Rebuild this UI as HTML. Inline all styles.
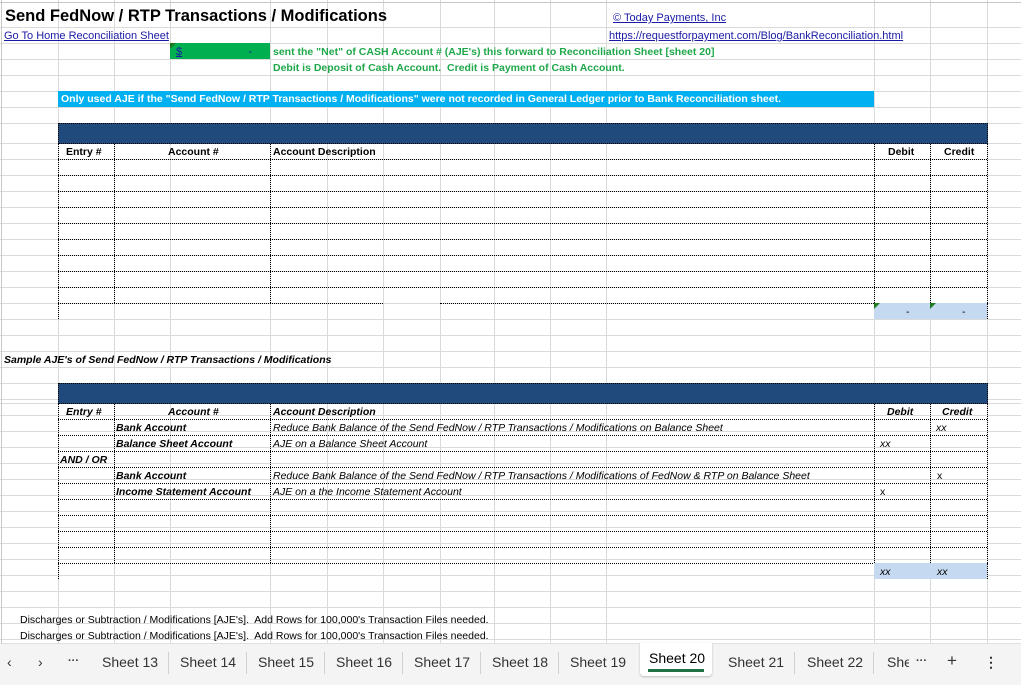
<!DOCTYPE html>
<html><head><meta charset="utf-8"><style>
body{margin:0;width:1021px;height:684px;overflow:hidden;background:#fff;position:relative;font-family:"Liberation Sans",Arial,sans-serif;}
.a{position:absolute;white-space:nowrap;}
.h{position:absolute;height:1px;background:#dadada;}
.v{position:absolute;width:1px;background:#dadada;}
.dh{position:absolute;height:0;border-top:1px dotted #000;}
.dv{position:absolute;width:0;border-left:1px dotted #000;}
.t{font-size:10.5px;line-height:16px;margin-top:1px;}
.b{font-weight:bold;}
.i{font-style:italic;}
.lnk{color:#1a1aa6;text-decoration:underline;font-size:11px;line-height:16px;}
.grn{color:#1fa84a;font-weight:bold;font-size:10.5px;line-height:16px;margin-top:1px;}
.bar{position:absolute;background:#214a7c;border:1px dotted #000;box-sizing:border-box;}
.tri{position:absolute;width:0;height:0;border-top:6px solid #1e7a1e;border-right:6px solid transparent;}
.tabs{position:absolute;left:0;top:643px;width:1021px;height:41px;background:#f4f4f4;border-top:1px solid #e0e0e0;}
.tab{position:absolute;top:10px;font-size:14px;color:#333;}
.sep{position:absolute;top:8px;width:1px;height:22px;background:#d0d0d0;}
</style></head><body>
<div id="g"></div>
<div class="v" style="left:1px;top:0;height:643px;background:#c8c8c8"></div>
<div class="h" style="left:0;top:2px;width:1021px;background:#c8c8c8"></div>

<div class="a b" style="left:5px;top:6px;font-size:16.5px;line-height:20px;color:#000">Send FedNow / RTP Transactions / Modifications</div>
<div class="a lnk" style="left:4px;top:28px">Go To Home Reconciliation Sheet</div>
<div class="a lnk" style="left:613px;top:10px">© Today Payments, Inc</div>
<div class="a lnk" style="left:609px;top:28px">https://requestforpayment.com/Blog/BankReconciliation.html</div>

<div class="a" style="left:170px;top:43px;width:100px;height:16px;background:#00b050"></div>
<div class="tri" style="left:170px;top:43px"></div>
<div class="a lnk" style="left:176px;top:44px;width:76px">$<span style="float:right">-</span></div>
<div class="a grn" style="left:273px;top:43px">sent the "Net" of CASH Account # (AJE's) this forward to Reconciliation Sheet [sheet 20]</div>
<div class="a grn" style="left:273px;top:59px">Debit is Deposit of Cash Account.&nbsp; Credit is Payment of Cash Account.</div>

<div class="a b" style="left:58px;top:91px;width:816px;height:16px;background:#00b0f0;color:#fff;font-size:10.5px;line-height:17px;padding-left:3px;box-sizing:border-box">Only used AJE if the "Send FedNow / RTP Transactions / Modifications" were not recorded in General Ledger prior to Bank Reconciliation sheet.</div>

<div class="bar" style="left:58px;top:123px;width:930px;height:21px"></div>
<div class="bar" style="left:58px;top:383px;width:930px;height:21px"></div>

<div class="a t b" style="left:66px;top:143px">Entry #</div>
<div class="a t b" style="left:168px;top:143px">Account #</div>
<div class="a t b" style="left:273px;top:143px">Account Description</div>
<div class="a t b" style="left:888px;top:143px">Debit</div>
<div class="a t b" style="left:944px;top:143px">Credit</div>
<div class="a" style="left:874px;top:303px;width:113px;height:16px;background:#c5d9f1"></div>
<div class="tri" style="left:874px;top:303px"></div><div class="tri" style="left:930px;top:303px"></div>
<div class="a t" style="left:906px;top:303px">-</div>
<div class="a t" style="left:962px;top:303px">-</div>

<div class="a t b i" style="left:4px;top:351px">Sample AJE's of Send FedNow / RTP Transactions / Modifications</div>

<div class="a t b i" style="left:66px;top:403px">Entry #</div>
<div class="a t b i" style="left:168px;top:403px">Account #</div>
<div class="a t b i" style="left:273px;top:403px">Account Description</div>
<div class="a t b i" style="left:887px;top:403px">Debit</div>
<div class="a t b i" style="left:942px;top:403px">Credit</div>
<div class="a t b i" style="left:116px;top:419px">Bank Account</div>
<div class="a t i" style="left:273px;top:419px">Reduce Bank Balance of the Send FedNow / RTP Transactions / Modifications on Balance Sheet</div>
<div class="a t i" style="left:936px;top:419px">xx</div>
<div class="a t b i" style="left:116px;top:435px">Balance Sheet Account</div>
<div class="a t i" style="left:273px;top:435px">AJE on a Balance Sheet Account</div>
<div class="a t i" style="left:880px;top:435px">xx</div>
<div class="a t b i" style="left:60px;top:451px">AND / OR</div>
<div class="a t b i" style="left:116px;top:467px">Bank Account</div>
<div class="a t i" style="left:273px;top:467px">Reduce Bank Balance of the Send FedNow / RTP Transactions / Modifications of FedNow &amp; RTP on Balance Sheet</div>
<div class="a t" style="left:937px;top:467px">x</div>
<div class="a t b i" style="left:116px;top:483px">Income Statement Account</div>
<div class="a t i" style="left:273px;top:483px">AJE on a the Income Statement Account</div>
<div class="a t" style="left:880px;top:483px">x</div>
<div class="a" style="left:874px;top:563px;width:113px;height:16px;background:#c5d9f1"></div>
<div class="a t i" style="left:880px;top:563px">xx</div>
<div class="a t i" style="left:937px;top:563px">xx</div>

<div class="a t" style="left:20px;top:611px;font-size:10.5px">Discharges or Subtraction / Modifications [AJE's].&nbsp; Add Rows for 100,000's Transaction Files needed.</div>
<div class="a t" style="left:20px;top:627px;font-size:10.5px">Discharges or Subtraction / Modifications [AJE's].&nbsp; Add Rows for 100,000's Transaction Files needed.</div>

<div class="tabs">
<div class="tab" style="left:7px">&#8249;</div>
<div class="tab" style="left:38px">&#8250;</div>
<div class="tab b" style="left:68px;font-size:11px;top:11px">&middot;&middot;&middot;</div>
<div class="tab" style="left:102px">Sheet 13</div><div class="sep" style="left:168px"></div>
<div class="tab" style="left:180px">Sheet 14</div><div class="sep" style="left:246px"></div>
<div class="tab" style="left:258px">Sheet 15</div><div class="sep" style="left:324px"></div>
<div class="tab" style="left:336px">Sheet 16</div><div class="sep" style="left:402px"></div>
<div class="tab" style="left:414px">Sheet 17</div><div class="sep" style="left:480px"></div>
<div class="tab" style="left:492px">Sheet 18</div><div class="sep" style="left:558px"></div>
<div class="tab" style="left:570px">Sheet 19</div>
<div class="a" style="left:640px;top:-1px;width:72px;height:33px;background:#fff;border-radius:0 0 4px 4px;box-shadow:0 1px 2px #bbb"></div>
<div class="tab" style="left:649px;top:6px;color:#000">Sheet 20</div>
<div class="a" style="left:648px;top:25px;width:56px;height:3px;background:#1e7145"></div>
<div class="tab" style="left:728px">Sheet 21</div><div class="sep" style="left:794px"></div>
<div class="tab" style="left:807px">Sheet 22</div><div class="sep" style="left:873px"></div>
<div class="tab" style="left:887px;width:22px;overflow:hidden">Sheet</div>
<div class="tab b" style="left:916px;font-size:11px;top:11px">&middot;&middot;&middot;</div>
<div class="tab" style="left:947px;font-size:17px;top:7px">+</div>
<div class="tab b" style="left:984px">&#8942;</div>
</div>

<script>
var g=document.getElementById('g'),s='';
var ys=[27,43,59,75,91,107,123];for(var y=143;y<=643;y+=16)ys.push(y);ys.splice(ys.indexOf(383)+1,0,403);
ys=ys.filter(function(v,i,a){return a.indexOf(v)===i;});
ys.forEach(function(y){s+='<div class="h" style="left:0;top:'+y+'px;width:1021px"></div>';});
[58,114,170,270,327,383,440,494,550,606,874,930,987].forEach(function(x){s+='<div class="v" style="left:'+x+'px;top:0;height:643px"></div>';});
function tbl(top,rows,gap){
 var hdr=top+20,end=hdr+16*(rows+1);
 for(var y=hdr+16;y<end;y+=16){s+='<div class="dh" style="left:58px;top:'+y+'px;width:929px"></div>';}
 if(gap){s+='<div class="dh" style="left:58px;top:'+end+'px;width:325px"></div><div class="dh" style="left:440px;top:'+end+'px;width:434px"></div>';}
 else{s+='<div class="dh" style="left:58px;top:'+end+'px;width:929px"></div>';}
 [58,114,270,874,930,987].forEach(function(x){s+='<div class="dv" style="left:'+x+'px;top:'+hdr+'px;height:'+(end-hdr)+'px"></div>';});
 [58,874,930,987].forEach(function(x){s+='<div class="dv" style="left:'+x+'px;top:'+end+'px;height:16px"></div>';});
}
tbl(123,9,true);tbl(383,9,false);
g.innerHTML=s;
</script>
</body></html>
